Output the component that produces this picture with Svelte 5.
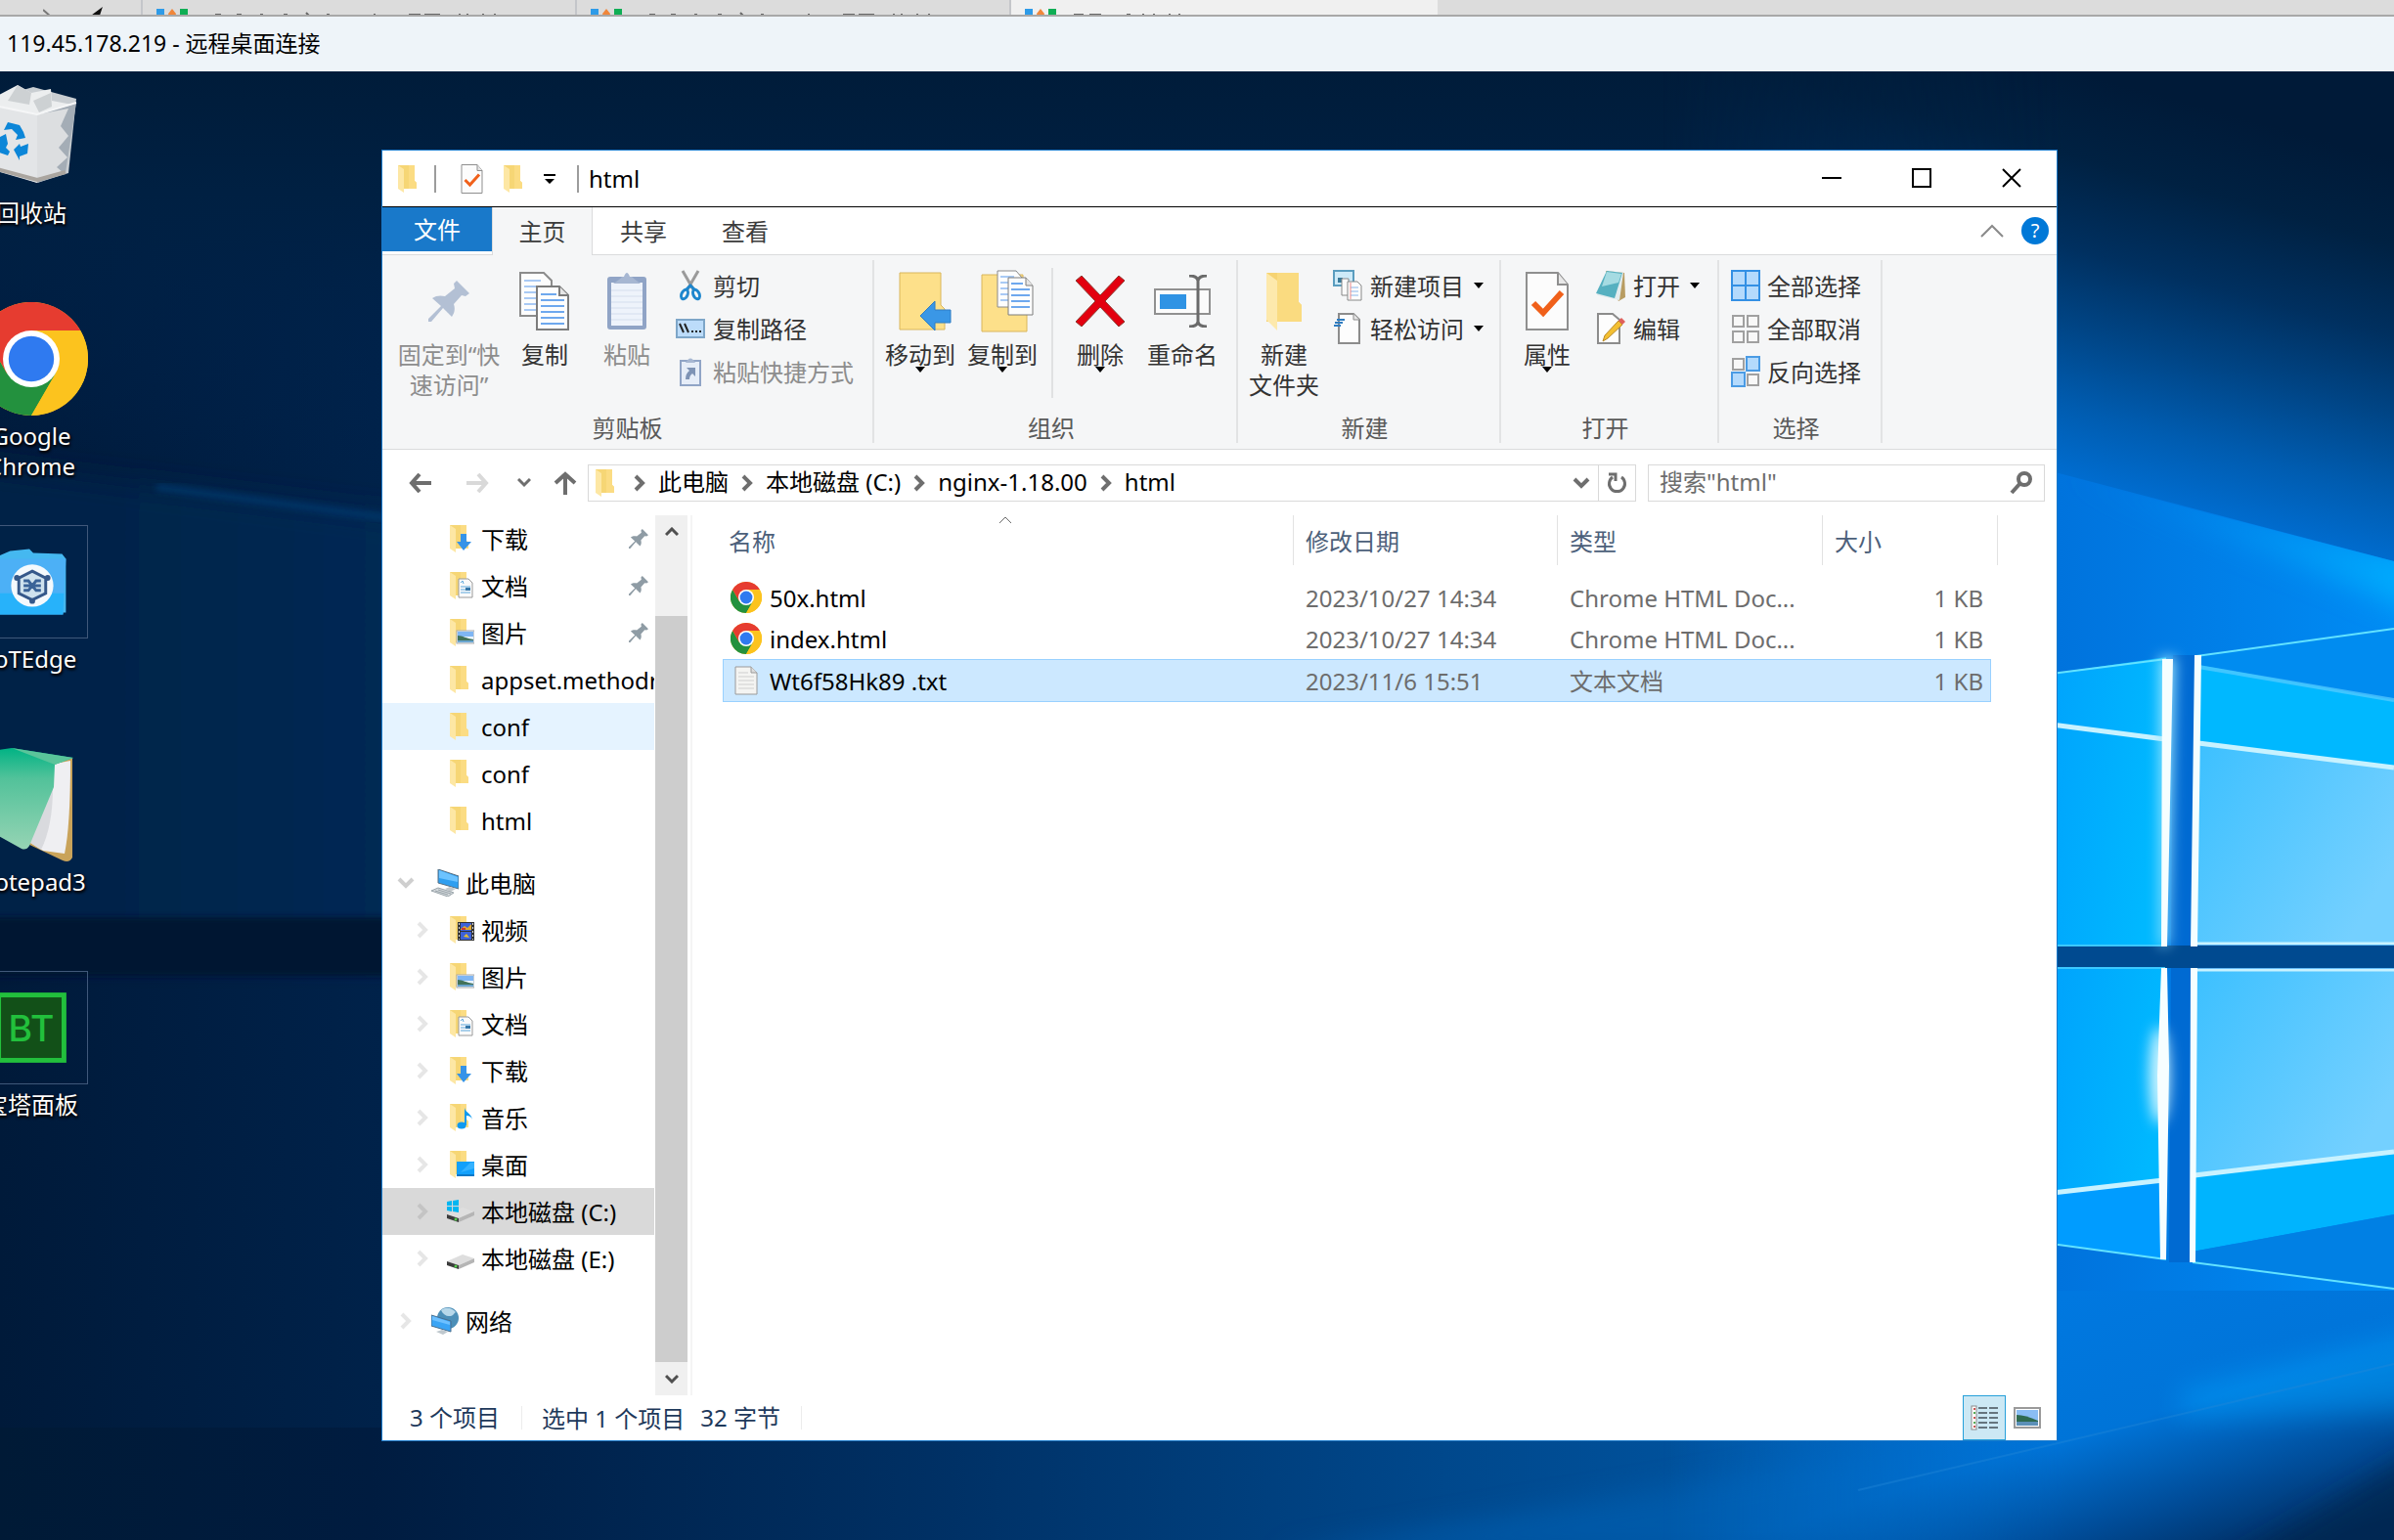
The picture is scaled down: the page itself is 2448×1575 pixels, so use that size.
<script>
  const quick = [
    { name: '下载', icon: 'download', pin: true },
    { name: '文档', icon: 'document', pin: true },
    { name: '图片', icon: 'picture', pin: true },
    { name: 'appset.methodresult', icon: 'plain' },
    { name: 'conf', icon: 'plain', hover: true },
    { name: 'conf', icon: 'plain' },
    { name: 'html', icon: 'plain' }
  ];
  const computer = [
    { name: '视频', icon: 'video' },
    { name: '图片', icon: 'picture' },
    { name: '文档', icon: 'document' },
    { name: '下载', icon: 'download' },
    { name: '音乐', icon: 'music' },
    { name: '桌面', icon: 'desktop' },
    { name: '本地磁盘 (C:)', icon: 'driveC', current: true },
    { name: '本地磁盘 (E:)', icon: 'drive' }
  ];
  const files = [
    { name: '50x.html', date: '2023/10/27 14:34', type: 'Chrome HTML Doc...', size: '1 KB', icon: 'chrome' },
    { name: 'index.html', date: '2023/10/27 14:34', type: 'Chrome HTML Doc...', size: '1 KB', icon: 'chrome' },
    { name: 'Wt6f58Hk89 .txt', date: '2023/11/6 15:51', type: '文本文档', size: '1 KB', icon: 'text', selected: true }
  ];
  const crumbs = ['此电脑', '本地磁盘 (C:)', 'nginx-1.18.00', 'html'];
  const shortcuts = [
    { icon: 'bin', lines: ['回收站'] },
    { icon: 'chrome', lines: ['Google', 'Chrome'] },
    { icon: 'iot', lines: ['IoTEdge'], framed: true },
    { icon: 'notepad', lines: ['Notepad3'] },
    { icon: 'bt', lines: ['宝塔面板'], framed: true }
  ];
</script>

{#snippet chrome()}
  <svg viewBox="0 0 48 48" aria-hidden="true">
    <circle cx="24" cy="24" r="24" fill="#fcc31e" />
    <path d="M24 24 L3.2 12 A24 24 0 0 1 44.8 12 L24 12 Z" fill="#e63c30" />
    <path d="M3.2 12 A24 24 0 0 0 24 48 L34.4 30 L24 24 L13.6 30 Z" fill="#23913e" />
    <path d="M3.2 12 L13.6 30 L24 24 V12 Z" fill="#e63c30" />
    <path d="M24 12 H44.8 A24 24 0 0 1 24 48 L34.4 30 Z" fill="#fcc31e" />
    <circle cx="24" cy="24" r="12" fill="#fff" />
    <circle cx="24" cy="24" r="9.6" fill="#2f7af0" />
  </svg>
{/snippet}

{#snippet folder(kind)}
  <svg class="i-folder" viewBox="0 0 28 28" width="28" height="28" aria-hidden="true">
    <path d="M3 0H20V16L22 18V24H3Z" fill="#f6d675" />
    <path d="M14 0H20V16L22 18V24H14Z" fill="#fbdc83" />
    <path d="M3 0L9 4V28L3 24Z" fill="#fde7a4" />
    {#if kind === 'download'}
      <path d="M14 9H20V17H25L17 26L10 17H14Z" fill="#3593e8" />
    {:else if kind === 'document'}
      <path d="M12 7H22L26 11V26H12Z" fill="#fafafa" stroke="#9a9a9a" />
      <path d="M14 11l2-2 1 3M14 15h10M14 18h10M14 21h10" stroke="#5aa6dc" fill="none" />
      <rect x="19" y="16" width="5" height="3" fill="#3577a8" />
    {:else if kind === 'picture'}
      <rect x="10" y="12" width="18" height="13" fill="#e8f4ff" stroke="#aaa" />
      <rect x="11" y="13" width="16" height="5" fill="#7fb6f4" />
      <path d="M11 17c5 0 9 3 16 4v1H11z" fill="#42725a" />
      <rect x="11" y="22" width="16" height="2" fill="#6aa5cf" />
    {:else if kind === 'video'}
      <rect x="11" y="6" width="17" height="19" fill="#333" />
      <rect x="14" y="7" width="11" height="8" fill="#3d62d8" />
      <rect x="14" y="16" width="11" height="8" fill="#3d62d8" />
      <path d="M14 13l4-3 3 2 4-4v6H14z" fill="#e0a82e" />
      <path d="M17 21l3-3 3 4z" fill="#e8c02e" />
      <path d="M15 12h4v2h-4z" fill="#d23a2a" />
      <path d="M12.500 7v17M26.500 7v17" stroke="#ddd" stroke-dasharray="2 2" />
    {:else if kind === 'music'}
      <ellipse cx="15" cy="22" rx="4.500" ry="3.500" fill="#109af0" />
      <path d="M18 22V4C19 9 26 10 26 17C26 13 22 12 20 12V22Z" fill="#109af0" />
    {:else if kind === 'desktop'}
      <path d="M10 11H28V25H10Z" fill="#12a0fb" />
      <path d="M10 24H28V26H10Z" fill="#0879c8" />
      <path d="M14 22L24 12H28V18Z" fill="#35b2ff" />
    {/if}
  </svg>
{/snippet}

{#snippet treeIcon(kind)}
  {#if kind === 'driveC' || kind === 'drive'}
    <svg viewBox="0 0 28 28" width="28" height="28" aria-hidden="true">
      <path d="M0 17L16 10L28 14L12 21Z" fill="#dedede" />
      <path d="M12 21L28 14V18L12 25Z" fill="#b5b5b5" />
      <path d="M0 17L12 21V25L0 21Z" fill="#3c3c3c" />
      <circle cx="9" cy="22" r="1.500" fill="#56d04c" />
      {#if kind === 'driveC'}
        <path d="M0 4L5 3V8H0ZM6 3L12 2V8H6ZM0 9H5V14L0 13ZM6 9H12V15L6 14Z" fill="#00b6f1" />
      {/if}
    </svg>
  {:else if kind === 'pc'}
    <svg viewBox="0 0 28 28" width="28" height="28" aria-hidden="true">
      <path d="M7 0L28 7V20L7 14Z" fill="#2f9ff0" stroke="#587083" />
      <path d="M8 1L27 8V13L8 9Z" fill="#6cc3ff" />
      <path d="M14 20l5-2 6 2-5 3z" fill="#c3c9cc" />
      <path d="M0 22L7 19L23 24L17 28Z" fill="#d5dadd" stroke="#9aa4aa" />
      <path d="M4 22l13 4M7 21l13 4" stroke="#9aa4aa" fill="none" />
    </svg>
  {:else if kind === 'net'}
    <svg viewBox="0 0 28 28" width="28" height="28" aria-hidden="true">
      <circle cx="17" cy="11" r="11" fill="#4c8fb8" />
      <path d="M10 3c5-4 12-2 15 2-3 2-2 4-7 4-3 0-6-2-8-6z" fill="#b7d8ea" />
      <path d="M0 8L20 14V25L0 19Z" fill="#3aa4f5" stroke="#4b6f8d" />
      <path d="M1 9L19 15V18L1 13Z" fill="#6dc0ff" />
      <path d="M5 25l6-2 6 2-5 3z" fill="#bfc8ce" />
    </svg>
  {:else}
    {@render folder(kind)}
  {/if}
{/snippet}

{#snippet pages()}
  <svg viewBox="0 0 52 60" width="52" height="60" aria-hidden="true">
    <path d="M1 1H25L33 9V45H1Z" fill="#fdfdfd" stroke="#8c8c8c" stroke-width="2" />
    <path d="M5 9h17M5 15h17M5 21h17M5 27h17M5 33h12M5 39h12" stroke="#a9caf5" stroke-width="2" />
    <path d="M18 15H41L50 24V59H18Z" fill="#fdfdfd" stroke="#7c7c7c" stroke-width="2" />
    <path d="M41 15V24H50" fill="#e6e6e6" stroke="#7c7c7c" stroke-width="2" />
    <path d="M22 23h16M22 29h24M22 35h24M22 41h24M22 47h24M22 53h24" stroke="#6ea8ee" stroke-width="2" />
  </svg>
{/snippet}

{#snippet pushpin(size, color)}
  <svg viewBox="0 0 42 42" width={size} height={size} aria-hidden="true">
    <path d="M29 0L42 13L38 16L34 15L26 24C28 30 26 34 24 37L15 28L3 42L0 42V39L13 26L4 18C8 15 13 15 17 16L27 8L26 3Z" fill={color} />
  </svg>
{/snippet}

{#snippet check(w, h)}
  <svg viewBox="0 0 44 60" width={w} height={h} aria-hidden="true">
    <path d="M1 1H33L43 13V59H1Z" fill="#fcfcfc" stroke="#8f8f8f" stroke-width="2" />
    <path d="M33 1V13H43" fill="#e8e8e8" stroke="#8f8f8f" stroke-width="2" />
    <path d="M8 32L18 42L37 21" fill="none" stroke="#f0601a" stroke-width="6" />
  </svg>
{/snippet}

{#snippet chevron(color, w)}
  <svg viewBox="0 0 12 18" width={w} height="18" aria-hidden="true">
    <path d="M2 2L9 9L2 16" fill="none" stroke={color} stroke-width="4" />
  </svg>
{/snippet}

{#snippet down(color)}
  <svg viewBox="0 0 18 12" width="18" height="12" aria-hidden="true">
    <path d="M2 2L9 9L16 2" fill="none" stroke={color} stroke-width="4" />
  </svg>
{/snippet}

{#snippet caret()}
  <svg class="caret" viewBox="0 0 10 6" width="10" height="6" aria-hidden="true"><path d="M0 0H10L5 6Z" /></svg>
{/snippet}

<div class="screen">
  <div class="browser" aria-hidden="true">
    <div class="btab first">
      <svg viewBox="0 0 70 17" width="70" height="17"><path d="M0 10L8 17" stroke="#777" stroke-width="2" /><path d="M50 17L58 11L56 17" stroke="#111" stroke-width="3" fill="none" /></svg>
    </div>
    {#each [1, 2, 3] as n}
      <div class="btab" class:active={n === 3}>
        <svg viewBox="0 0 400 17" width="400" height="17">
          <rect x="0" y="9" width="8" height="8" fill="#2e9be8" />
          <path d="M16 9L20 14L19 17H13L12 14Z" fill="#f0863a" />
          <rect x="24" y="9" width="8" height="8" fill="#0fae55" />
          {#if n < 3}
            <path d="M60 15h6M82 15h5M106 15h3M130 15h4M153 13l3 3M174 15h3M223 14v2M258 15h12M274 15h16M310 14v2M318 14v2M334 14v2M346 14v2" stroke="#666" stroke-width="2" />
          {:else}
            <path d="M50 15h10M66 15h12M104 15h4M121 14v2M132 14v2M148 14v2M158 14v2" stroke="#666" stroke-width="2" />
          {/if}
        </svg>
      </div>
    {/each}
  </div>

  <header class="rdp">119.45.178.219 - 远程桌面连接</header>

  <main class="remote">
    <svg class="wallpaper" viewBox="0 73 2448 1502" preserveAspectRatio="none" aria-hidden="true">
      <defs>
        <linearGradient id="base" x1="0" x2="1">
          <stop offset="0" stop-color="#001a3a" /><stop offset="0.16" stop-color="#00224a" />
          <stop offset="0.5" stop-color="#003c7c" /><stop offset="0.8" stop-color="#0062b8" /><stop offset="1" stop-color="#0066c4" />
        </linearGradient>
        <linearGradient id="sky" gradientUnits="userSpaceOnUse" x1="0" y1="73" x2="0" y2="480">
          <stop offset="0" stop-color="#001c3a" /><stop offset="0.3" stop-color="#002042" /><stop offset="1" stop-color="#002450" stop-opacity="0" />
        </linearGradient>
        <linearGradient id="right" gradientUnits="userSpaceOnUse" x1="2290" y1="120" x2="2180" y2="520">
          <stop offset="0" stop-color="#001a38" /><stop offset="0.2" stop-color="#002142" />
          <stop offset="0.42" stop-color="#003060" /><stop offset="0.6" stop-color="#004484" />
          <stop offset="0.8" stop-color="#005cb0" /><stop offset="1" stop-color="#0070d6" />
        </linearGradient>
        <linearGradient id="mid" x1="0" x2="1"><stop offset="0" stop-color="#0072dc" /><stop offset="1" stop-color="#008cf4" /></linearGradient>
        <linearGradient id="beam" x1="0" x2="1"><stop offset="0" stop-color="#0084ec" stop-opacity="0" /><stop offset="1" stop-color="#00b0ff" /></linearGradient>
        <linearGradient id="paneL" x1="0" x2="1" y2="0.300"><stop offset="0" stop-color="#00a2fc" /><stop offset="1" stop-color="#00b8ff" /></linearGradient>
        <linearGradient id="paneR" x1="0" x2="1" y2="0.600"><stop offset="0" stop-color="#3cc0ff" /><stop offset="1" stop-color="#74d0ff" /></linearGradient>
        <linearGradient id="foot" gradientUnits="userSpaceOnUse" x1="2200" y1="1300" x2="2290" y2="1600">
          <stop offset="0" stop-color="#0078e0" /><stop offset="0.45" stop-color="#0074d8" /><stop offset="0.75" stop-color="#004c98" /><stop offset="1" stop-color="#002c5e" />
        </linearGradient>
        <linearGradient id="bottom" gradientUnits="userSpaceOnUse" x1="0" y1="0" x2="2110" y2="0">
          <stop offset="0" stop-color="#001a36" /><stop offset="0.18" stop-color="#001c40" /><stop offset="0.45" stop-color="#003064" />
          <stop offset="0.7" stop-color="#00488c" /><stop offset="1" stop-color="#0060b4" />
        </linearGradient>
        <linearGradient id="leftLight" x1="0" x2="1"><stop offset="0" stop-color="#002144" /><stop offset="1" stop-color="#002a56" /></linearGradient>
        <linearGradient id="fade" gradientUnits="userSpaceOnUse" x1="1700" y1="0" x2="2110" y2="0">
          <stop offset="0" stop-color="#000" /><stop offset="1" stop-color="#fff" />
        </linearGradient>
        <mask id="easeIn" maskUnits="userSpaceOnUse" x="1700" y="73" width="748" height="1502"><rect x="1700" y="73" width="748" height="1502" fill="url(#fade)" /></mask>
        <clipPath id="below"><path d="M2090 482L2448 574V800H2090Z" /></clipPath>
        <filter id="soft" x="-20%" y="-30%" width="140%" height="160%"><feGaussianBlur stdDeviation="14" /></filter>
        <filter id="glow" x="-300%" y="-20%" width="700%" height="140%"><feGaussianBlur stdDeviation="7" /></filter>
        <filter id="fine"><feGaussianBlur stdDeviation="3" /></filter>
      </defs>
      <rect y="73" width="2448" height="1502" fill="url(#base)" />
      <rect y="73" width="2448" height="420" fill="url(#sky)" />
      <path d="M-60 470L460 535V980H-60Z" fill="url(#leftLight)" filter="url(#soft)" />
      <path d="M160 498L400 530" stroke="#003a70" stroke-width="8" opacity="0.700" filter="url(#fine)" />
      <rect x="-40" y="938" width="470" height="60" fill="#001430" filter="url(#fine)" />
      <rect y="1460" width="2448" height="115" fill="url(#bottom)" />
      <path d="M1300 1590L2130 1450V1590Z" fill="#0064b8" opacity="0.500" filter="url(#soft)" />
      <g mask="url(#easeIn)">
        <rect x="1700" y="73" width="748" height="540" fill="url(#right)" />
        <rect x="1700" y="1280" width="748" height="295" fill="url(#foot)" />
      </g>
      <path d="M2090 480L2448 574V1320H2090Z" fill="url(#mid)" />
      <g clip-path="url(#below)"><path d="M2090 482L2480 574V630L2200 520Z" fill="url(#beam)" filter="url(#soft)" /></g>
      <path d="M2230 1420L2520 1350V1440L2230 1450Z" fill="#009cf8" opacity="0.500" filter="url(#soft)" />
      <path d="M2260 1610L2500 1470V1610Z" fill="#002850" opacity="0.700" filter="url(#soft)" />
      <path d="M1900 1524L2448 1395" stroke="#2488d8" stroke-width="2" opacity="0.400" />
      <path d="M2222 670H2244L2240 1291H2218Z" fill="#006ad2" />
      <rect x="2090" y="967" width="358" height="23" fill="#004a90" />
      <path d="M2090 690L2215 672V967H2090Z" fill="url(#paneL)" />
      <path d="M2090 990H2214V1288L2090 1270Z" fill="url(#paneL)" />
      <path d="M2245 671L2448 644V715L2248 682Z" fill="#008cf0" />
      <path d="M2248 680L2448 716V786L2248 761Z" fill="#00b8ff" />
      <path d="M2246 761L2448 786V966H2244Z" fill="url(#paneR)" />
      <path d="M2243 991H2448V1178L2242 1202Z" fill="url(#paneR)" />
      <path d="M2242 1202L2448 1178V1242L2242 1280Z" fill="#00b4fe" />
      <path d="M2242 1280L2448 1242V1318L2242 1290Z" fill="#0080e4" />
      <path d="M2090 1220L2210 1207V1288L2090 1271Z" fill="#009cff" />
      <g fill="none" stroke="#c8f2ff">
        <path d="M2090 690L2215 674M2246 671L2448 643M2090 1271L2215 1288M2242 1291L2448 1318" stroke="#62e2ff" stroke-width="2" />
        <path d="M2248 682L2448 716" stroke="#5accff" stroke-width="4" opacity="0.700" />
        <path d="M2090 740L2214 756M2248 760L2448 785M2090 1221L2212 1207M2244 1202L2448 1178" stroke-width="5" />
        <path d="M2090 967H2214M2090 990H2214" stroke="#3cc8ff" stroke-width="2" />
        <path d="M2242 965H2448M2242 992H2448" stroke-width="3" />
      </g>
      <path d="M2209 672H2224L2217 967H2209Z" fill="#a0e8ff" filter="url(#glow)" />
      <ellipse cx="2208" cy="1100" rx="10" ry="50" fill="#d4f6ff" filter="url(#glow)" />
      <path d="M2211 674L2222 674L2216 968H2210ZM2210 990H2216L2218 1090L2215 1288H2209L2206 1100Z" fill="#f6feff" />
      <path d="M2244 670H2251L2247 968H2240ZM2240 990H2247L2245 1291H2239Z" fill="#f4feff" />
    </svg>

    <nav class="shortcuts" aria-label="桌面">
      {#each shortcuts as s}
        <a class="shortcut" href="#desktop">
          <span class="art" class:framed={s.framed}>
            {#if s.icon === 'chrome'}
              {@render chrome()}
            {:else if s.icon === 'bin'}
              <svg viewBox="0 0 116 116" aria-hidden="true">
                <path d="M4 24L60 8L104 20L96 96L64 106L16 90Z" fill="#c9ced2" />
                <path d="M6 24L64 36V106L16 92Z" fill="#e3e5e7" />
                <path d="M64 36L104 24L93 96L64 106Z" fill="#a4adb6" />
                <path d="M64 36L96 30L88 48L96 58L86 70L95 80L84 90L91 96L64 104Z" fill="#dcdee0" />
                <path d="M10 24L44 6L58 14L78 10L79 22L100 26L64 36Z" fill="#eceeef" />
                <path d="M44 6L34 22L56 26L58 14ZM60 22L78 14L79 28L66 34Z" fill="#cdd1d3" />
                <path d="M104 24L64 36L6 24" fill="none" stroke="#f5f6f7" stroke-width="2" />
                <path d="M16 90L64 103L93 95" fill="none" stroke="#aaa59f" stroke-width="4" />
                <path d="M30 52L34 44L46 47L50 54L52 60L42 62L44 57L38 51ZM24 60L32 56L34 66L32 70L36 74L34 78L22 74ZM40 72L46 66L47 69L55 66L54 76L46 79L46 83Z" fill="#0c86d8" />
              </svg>
            {:else if s.icon === 'iot'}
              <svg viewBox="0 0 116 116" aria-hidden="true">
                <path d="M22 32L36 26L56 24L60 28L90 29L94 34V90H22Z" fill="#45b8f0" />
                <path d="M22 34H94L91 92H24Z" fill="#4cb0f6" />
                <path d="M23 70H92L91 92H24Z" fill="#27b2fa" />
                <circle cx="59" cy="62" r="22" fill="#f4f9fd" />
                <path d="M59 47L73 54V70L59 77L45 70V54Z" fill="#cfe2ee" stroke="#35588a" stroke-width="3" />
                <path d="M50 57H55L63 67H68M50 67H55L63 57H68M50 62H68" fill="none" stroke="#3a6398" stroke-width="3" />
                <circle cx="43" cy="54" r="3" fill="#35588a" /><circle cx="75" cy="54" r="3" fill="#35588a" /><circle cx="59" cy="78" r="3" fill="#35588a" />
              </svg>
            {:else if s.icon === 'notepad'}
              <svg viewBox="0 0 116 116" aria-hidden="true">
                <defs><linearGradient id="np" x2="0" y2="1"><stop offset="0" stop-color="#00b384" /><stop offset="0.300" stop-color="#52c29a" /><stop offset="1" stop-color="#96d4b4" /></linearGradient></defs>
                <path d="M82 16L100 10V112Q97 118 90 115L50 96Z" fill="#c9a35a" />
                <path d="M82 16L98 13Q98 80 92 108L70 105L54 95Z" fill="#efeff2" />
                <path d="M80 40Q80 80 68 104L54 95Z" fill="#d9dade" />
                <path d="M10 4L38 0L101 10L82 17L81 40L56 100Q53 105 48 103L10 82Z" fill="url(#np)" />
                <path d="M38 0L101 10L82 17Z" fill="#5ac49a" />
              </svg>
            {:else}
              <svg viewBox="0 0 116 116" aria-hidden="true">
                <rect x="24" y="24" width="68" height="68" fill="#125018" stroke="#22c03c" stroke-width="5" />
                <text x="58" y="72" text-anchor="middle" class="bt">BT</text>
              </svg>
            {/if}
          </span>
          {#each s.lines as line}<span>{line}</span>{/each}
        </a>
      {/each}
    </nav>

    <section class="window" aria-label="html">
      <div class="titlebar">
        <span class="tfolder">{@render folder('plain')}</span>
        <span class="bar"></span>
        <button class="q1" aria-label="属性">{@render check(23, 30)}</button>
        <button class="q2" aria-label="新建文件夹">{@render folder('plain')}</button>
        <button class="q3" aria-label="自定义快速访问工具栏">
          <svg viewBox="0 0 12 10" width="12" height="10"><path d="M0 0H12V2H0ZM1 5H11L6 10Z" /></svg>
        </button>
        <span class="bar"></span>
        <h1>html</h1>
        <div class="controls">
          <button aria-label="最小化"><svg viewBox="0 0 20 20" width="20" height="20"><path d="M0 10H20" stroke="#000" stroke-width="2" /></svg></button>
          <button aria-label="最大化"><svg viewBox="0 0 20 20" width="20" height="20"><rect x="1" y="1" width="18" height="18" fill="none" stroke="#000" stroke-width="2" /></svg></button>
          <button aria-label="关闭"><svg viewBox="0 0 20 20" width="20" height="20"><path d="M1 1L19 19M19 1L1 19" stroke="#000" stroke-width="2" /></svg></button>
        </div>
      </div>

      <div class="tabs">
        <button class="file">文件</button>
        <button class="tab on">主页</button>
        <button class="tab">共享</button>
        <button class="tab">查看</button>
        <span class="fill"></span>
        <button class="collapse" aria-label="折叠功能区"><svg viewBox="0 0 24 16" width="24" height="16"><path d="M1 14L12 3L23 14" fill="none" stroke="#8a8a8a" stroke-width="2" /></svg></button>
        <button class="help" aria-label="帮助">?</button>
      </div>

      <div class="ribbon">
        <div class="group g1">
          <div class="tools">
            <button class="big wide off" disabled><span class="pic">{@render pushpin(42, '#b3c0d4')}</span><span>固定到“快</span><span>速访问”</span></button>
            <button class="big"><span class="pic">{@render pages()}</span><span>复制</span></button>
            <button class="big off" disabled>
              <span class="pic"><svg viewBox="0 0 42 60" width="42" height="60" aria-hidden="true">
                <rect x="1" y="5" width="40" height="54" rx="3" fill="#90a4c6" />
                <rect x="5" y="11" width="32" height="44" fill="#eef3fb" />
                <path d="M5 19h32M5 25h32M5 31h32M5 37h32M5 43h32M5 49h32" stroke="#d5deed" />
                <path d="M7 12Q14 8 16 5H18Q21-3 24 5H26Q29 8 35 12Z" fill="#a7b7d2" />
              </svg></span><span>粘贴</span>
            </button>
            <div class="stack">
              <button class="small">
                <span><svg viewBox="0 0 22 32" width="22" height="32" aria-hidden="true"><path d="M3 1L14 20M19 1L8 20" stroke="#9a9a9a" stroke-width="3" /><ellipse cx="5" cy="25" rx="3" ry="5" transform="rotate(25 5 25)" fill="none" stroke="#1d86cd" stroke-width="3" /><ellipse cx="17" cy="25" rx="3" ry="5" transform="rotate(-25 17 25)" fill="none" stroke="#1d86cd" stroke-width="3" /><path d="M7 20L11 16L15 20" stroke="#1d86cd" stroke-width="3" fill="none" /></svg></span>剪切</button>
              <button class="small">
                <span><svg viewBox="0 0 30 20" width="30" height="20" aria-hidden="true"><rect x="1" y="1" width="28" height="18" fill="#bcdcfa" stroke="#7ea6c8" stroke-width="2" /><path d="M4 5L8 14M9 5L13 14M16 13h2M20 13h2M24 13h2" stroke="#222" stroke-width="2" /></svg></span>复制路径</button>
              <button class="small off" disabled>
                <span><svg viewBox="0 0 22 30" width="22" height="30" aria-hidden="true"><rect x="1" y="4" width="20" height="25" fill="#e6edf8" stroke="#90a4c6" stroke-width="2" /><path d="M6 6Q11-3 16 6Z" fill="#a7b7d2" /><path d="M7 11H16V20L13 17Q10 19 10 23H6Q6 17 10 14Z" fill="#7e93b5" /></svg></span>粘贴快捷方式</button>
            </div>
          </div>
          <p>剪贴板</p>
        </div>

        <div class="group g2">
          <div class="tools">
            <button class="big"><span class="pic lead"><svg viewBox="0 0 54 60" width="54" height="60" aria-hidden="true"><path d="M1 1H43V34L47 38V59H1Z" fill="#fde08a" stroke="#d9b65c" /><path d="M22 45L37 30V39H53V52H37V60Z" fill="#3a97e6" stroke="#2f7dc4" /></svg></span><span>移动到</span>{@render caret()}</button>
            <button class="big"><span class="pic lead"><svg viewBox="0 0 54 64" width="54" height="64" aria-hidden="true"><path d="M1 5H43V38L47 42V63H1Z" fill="#fde08a" stroke="#d9b65c" /><path d="M17 1H36L42 8V38H17Z" fill="#fdfdfd" stroke="#8a8a8a" /><path d="M20 7h14M20 13h8M20 19h8M20 25h8M20 31h8" stroke="#a9caf5" stroke-width="2" /><path d="M28 8H46L53 16V46H28Z" fill="#fdfdfd" stroke="#7c7c7c" /><path d="M46 8V16H53" fill="#e6e6e6" stroke="#7c7c7c" /><path d="M31 14h12M31 20h19M31 26h19M31 32h19M31 38h19" stroke="#6ea8ee" stroke-width="2" /></svg></span><span>复制到</span>{@render caret()}</button>
            <span class="split"></span>
            <button class="big"><span class="pic"><svg viewBox="0 0 50 52" width="50" height="52" aria-hidden="true"><path d="M6 0L25 20L44 0L50 5L30 26L50 47L44 52L25 32L6 52L0 47L20 26L0 5Z" fill="#e3000f" stroke="#8c3a32" /></svg></span><span>删除</span>{@render caret()}</button>
            <button class="big"><span class="pic"><svg viewBox="0 0 58 54" width="58" height="54" aria-hidden="true"><rect x="1" y="15" width="56" height="25" fill="#fbfbfb" stroke="#909090" stroke-width="2" /><rect x="6" y="20" width="27" height="15" fill="#2f93e4" /><path d="M45 4V50M36 1Q44 1 45 6Q46 1 54 1M36 53Q44 53 45 48Q46 53 54 53" fill="none" stroke="#6a6a6a" stroke-width="3" /></svg></span><span>重命名</span></button>
          </div>
          <p>组织</p>
        </div>

        <div class="group g3">
          <div class="tools">
            <button class="big"><span class="pic"><svg viewBox="0 0 38 60" width="38" height="60" aria-hidden="true"><path d="M1 1H34V31L37 34V51H1Z" fill="#f6d372" /><path d="M12 1H34V31L37 34V51H12Z" fill="#fadb80" /><path d="M1 1L12 9V60L1 49Z" fill="#fde9ac" /></svg></span><span>新建</span><span>文件夹</span></button>
            <div class="stack">
              <button class="small"><span><svg viewBox="0 0 30 32" width="30" height="32" aria-hidden="true"><rect x="1" y="1" width="20" height="15" fill="#cdeaf8" stroke="#5a9dbf" stroke-width="2" /><path d="M5 13V8H10V13Z" fill="#3a7a9a" /><path d="M9 9H16V26H9Z" fill="#fafafa" stroke="#888" /><path d="M15 12H25L29 16V31H15Z" fill="#fdfdfd" stroke="#888" /><path d="M18 18h8M18 22h8M18 26h8" stroke="#8ab6ea" /><path d="M18 13v17" stroke="#e88" /></svg></span>新建项目{@render caret()}</button>
              <button class="small"><span><svg viewBox="0 0 28 32" width="28" height="32" aria-hidden="true"><path d="M5 1H20L26 7V31H5Z" fill="#fdfdfd" stroke="#8c8c8c" stroke-width="2" /><path d="M20 1V7H26" fill="#e6e6e6" stroke="#8c8c8c" /><path d="M3 7h8M1 10h8M0 13h7" stroke="#2e7cc0" stroke-width="2" /></svg></span>轻松访问{@render caret()}</button>
            </div>
          </div>
          <p>新建</p>
        </div>

        <div class="group g4">
          <div class="tools">
            <button class="big"><span class="pic">{@render check(44, 60)}</span><span>属性</span>{@render caret()}</button>
            <div class="stack">
              <button class="small"><span><svg viewBox="0 0 32 32" width="32" height="32" aria-hidden="true"><path d="M11 1L30 3L31 28L24 32Z" fill="#b89c62" /><path d="M14 1L29 3L25 31L2 26Z" fill="#e4ecee" /><path d="M12 1L28 3L20 29L1 24Z" fill="#56b0c0" /><path d="M12 2L27 4L24 13L7 17Z" fill="#a5dbe2" /></svg></span>打开{@render caret()}</button>
              <button class="small"><span><svg viewBox="0 0 30 32" width="30" height="32" aria-hidden="true"><path d="M2 1H17L24 7V31H2Z" fill="#fdfdfd" stroke="#8c8c8c" stroke-width="2" /><path d="M7 29L9 23L23 8L27 12L12 26Z" fill="#f3bf32" stroke="#b9892a" /><path d="M23 8L26 5L30 9L27 12Z" fill="#e0605c" /></svg></span>编辑</button>
            </div>
          </div>
          <p>打开</p>
        </div>

        <div class="group g5">
          <div class="tools">
            <div class="stack">
              <button class="small"><span><svg viewBox="0 0 30 32" width="30" height="32" aria-hidden="true"><g fill="#b4dafc" stroke="#3390e4" stroke-width="2"><path d="M1 1H15V16H1ZM15 1H29V16H15ZM1 16H15V31H1ZM15 16H29V31H15Z" /></g></svg></span>全部选择</button>
              <button class="small"><span><svg viewBox="0 0 30 32" width="30" height="32" aria-hidden="true"><g fill="#f8f8f8" stroke="#a0a0a0" stroke-width="2"><path d="M2 3H13V14H2ZM17 3H28V14H17ZM2 19H13V30H2ZM17 19H28V30H17Z" /></g></svg></span>全部取消</button>
              <button class="small"><span><svg viewBox="0 0 30 32" width="30" height="32" aria-hidden="true"><g fill="#f8f8f8" stroke="#a0a0a0" stroke-width="2"><path d="M2 3H13V14H2ZM17 19H28V30H17Z" /></g><g fill="#b4dafc" stroke="#4a9be4" stroke-width="2"><path d="M16 1H29V15H16ZM1 17H14V31H1Z" /></g></svg></span>反向选择</button>
            </div>
          </div>
          <p>选择</p>
        </div>
      </div>

      <div class="nav">
        <button aria-label="后退"><svg viewBox="0 0 24 20" width="24" height="20"><path d="M11 1L3 10L11 19M3 10H23" fill="none" stroke="#6e6e6e" stroke-width="4" /></svg></button>
        <button aria-label="前进"><svg viewBox="0 0 24 20" width="24" height="20"><path d="M13 1L21 10L13 19M21 10H1" fill="none" stroke="#d9d9d9" stroke-width="4" /></svg></button>
        <button class="recent" aria-label="最近位置"><svg viewBox="0 0 14 10" width="14" height="10"><path d="M1 1L7 7L13 1" fill="none" stroke="#6e6e6e" stroke-width="3" /></svg></button>
        <button class="up" aria-label="上移"><svg viewBox="0 0 24 24" width="24" height="24"><path d="M2 12L12 3L22 12M12 3V24" fill="none" stroke="#6e6e6e" stroke-width="4" /></svg></button>
        <div class="address">
          <span class="afolder">{@render folder('plain')}</span>
          {#each crumbs as c}
            <span class="sep">{@render chevron('#6e6e6e', 12)}</span><a href="#path">{c}</a>
          {/each}
          <span class="fill"></span>
          <button class="drop" aria-label="以前的位置">{@render down('#6e6e6e')}</button>
          <button class="refresh" aria-label="刷新"><svg viewBox="0 0 22 22" width="22" height="22"><path d="M15 5A8 8 0 1 1 6 5" fill="none" stroke="#6e6e6e" stroke-width="3" /><path d="M2 2H9V9" fill="none" stroke="#6e6e6e" stroke-width="3" /></svg></button>
        </div>
        <label class="search">
          <input type="text" placeholder={'搜索"html"'} aria-label="搜索html" />
          <svg viewBox="0 0 24 24" width="24" height="24" aria-hidden="true"><circle cx="15" cy="8" r="6" fill="none" stroke="#6e6e6e" stroke-width="4" /><path d="M11 12L2 22" stroke="#6e6e6e" stroke-width="4" /></svg>
        </label>
      </div>

      <div class="body">
        <nav class="tree" aria-label="导航窗格">
          {#each quick as q}
            <a href="#folder" class="leaf" class:hover={q.hover}>
              <span class="exp"></span>{@render treeIcon(q.icon)}<span class="label">{q.name}</span>
              {#if q.pin}<span class="pin">{@render pushpin(20, '#8f9ca5')}</span>{/if}
            </a>
          {/each}
          <a href="#pc" class="leaf root"><span class="exp">{@render down('#cfcfcf')}</span>{@render treeIcon('pc')}<span class="label">此电脑</span></a>
          {#each computer as c}
            <a href="#folder" class="leaf" class:current={c.current}>
              <span class="exp">{@render chevron(c.current ? '#c4c4c4' : '#e6e6e6', 12)}</span>{@render treeIcon(c.icon)}<span class="label">{c.name}</span>
            </a>
          {/each}
          <a href="#net" class="leaf root"><span class="exp">{@render chevron('#e6e6e6', 12)}</span>{@render treeIcon('net')}<span class="label">网络</span></a>
        </nav>
        <div class="scroll" aria-hidden="true">
          <span class="arrow"><svg viewBox="0 0 14 10" width="14" height="10"><path d="M1 8L7 2L13 8" fill="none" stroke="#505050" stroke-width="3" /></svg></span>
          <span class="track"></span>
          <span class="thumb"></span>
          <span class="arrow"><svg viewBox="0 0 14 10" width="14" height="10"><path d="M1 2L7 8L13 2" fill="none" stroke="#505050" stroke-width="3" /></svg></span>
        </div>
        <div class="list">
          <table>
            <colgroup><col /><col class="c-date" /><col class="c-type" /><col class="c-size" /><col class="c-end" /></colgroup>
            <thead>
              <tr>
                <th><div>名称<svg class="sort" viewBox="0 0 14 8" width="14" height="8" aria-hidden="true"><path d="M1 7L7 1L13 7" fill="none" stroke="#6a6a6a" /></svg></div></th>
                <th><div>修改日期</div></th>
                <th><div>类型</div></th>
                <th colspan="2"><div>大小</div></th>
              </tr>
            </thead>
            <tbody>
              {#each files as f}
                <tr class:selected={f.selected}>
                  <td>
                    <span class="fname">
                      <span class="ficon">
                        {#if f.icon === 'chrome'}{@render chrome()}{:else}
                          <svg viewBox="0 0 32 32" aria-hidden="true"><path d="M5 2H21L27 8V30H5Z" fill="#f4f4f2" stroke="#9a9a9a" /><path d="M21 2V8H27" fill="#ddd" stroke="#9a9a9a" /><path d="M8 8h10M8 12h16M8 16h16M8 20h16M8 24h16" stroke="#cfcfcf" /></svg>
                        {/if}
                      </span>{f.name}</span>
                  </td>
                  <td>{f.date}</td>
                  <td>{f.type}</td>
                  <td class="num">{f.size}</td>
                  <td class="end"></td>
                </tr>
              {/each}
            </tbody>
          </table>
        </div>
      </div>

      <footer class="status">
        <span class="s1">3 个项目</span>
        <span class="s2">选中 1 个项目</span>
        <span class="s3">32 字节</span>
        <span class="fill"></span>
        <button class="view on" aria-label="详细信息">
          <svg viewBox="0 0 28 26" width="28" height="26"><rect x="1" y="1" width="5" height="24" fill="#fff" stroke="#8a8a8a" /><path d="M3 4h2M3 13h2M3 22h2" stroke="#c55" stroke-width="2" /><path d="M3 8h2M3 18h2" stroke="#5a5" stroke-width="2" /><path d="M8 3h9M8 8h9M8 13h9M8 18h9M8 23h9M19 3h9M19 8h9M19 13h9M19 18h9M19 23h9" stroke="#66757e" stroke-width="2" /></svg>
        </button>
        <button class="view" aria-label="大缩略图">
          <svg viewBox="0 0 28 22" width="28" height="22"><rect x="1" y="1" width="26" height="20" fill="#fff" stroke="#9a9a9a" stroke-width="2" /><rect x="3" y="3" width="22" height="16" fill="#8abdf4" /><path d="M3 8Q12 8 25 14V15H3Z" fill="#2f6a50" /><rect x="3" y="15" width="22" height="4" fill="#5c90b8" /></svg>
        </button>
      </footer>
    </section>
  </main>
</div>

<style>
  :global(body) { margin: 0; overflow: hidden; }
  :global(html), :global(body), :global(#app) { height: 100%; }
  .screen {
    display: flex; flex-direction: column; height: 100vh; overflow: hidden;
    font-family: 'Noto Sans', 'Noto Sans CJK SC', sans-serif; font-size: 24px; line-height: 31px; color: #000;
  }
  .screen * { box-sizing: border-box; }
  button { font: inherit; color: inherit; background: none; border: 0; padding: 0; margin: 0; }
  a { color: inherit; text-decoration: none; }
  svg { flex: none; display: block; }
  .fill { flex: 1; }

  .browser { display: flex; height: 17px; flex: none; background: #dcdcdc; overflow: hidden; border-bottom: 2px solid #a8a8a8; }
  .btab { width: 444px; flex: none; padding-left: 14px; border-left: 2px solid #c4c6ca; overflow: hidden; }
  .btab.first { width: 144px; padding-left: 44px; border: 0; }
  .btab.active { width: 438px; background: #f0f0f0; }
  .rdp { flex: none; height: 56px; padding-left: 7px; line-height: 54px; font-size: 23px; background: #eef4f9; white-space: nowrap; }

  .remote { position: relative; flex: 1; overflow: hidden; background: #001c3c; }
  .wallpaper { position: absolute; inset: 0; width: 100%; height: 100%; }
  .shortcuts { position: relative; display: flex; flex-direction: column; width: 116px; margin-left: -26px; padding-top: 8px; }
  .shortcut {
    display: flex; flex-direction: column; align-items: center; height: 228px;
    color: #fff; text-shadow: 0 1px 3px #000, 1px 2px 3px #000; white-space: nowrap;
  }
  .art { width: 116px; height: 116px; margin-bottom: 5px; flex: none; }
  .art svg { width: 100%; height: 100%; }
  .framed { border: 1px solid #40587a; }
  .bt { font: 500 38px Inter, sans-serif; fill: #22c03c; text-shadow: none; }

  .window {
    position: absolute; left: 390px; top: 80px; right: 344px; bottom: 101px;
    display: flex; flex-direction: column; background: #fff; border: 1px solid #1979ca;
  }
  .titlebar { display: flex; align-items: center; height: 58px; flex: none; border-bottom: 1px solid #000; }
  .tfolder { margin-left: 13px; margin-right: 12px; }
  .bar { width: 2px; height: 28px; background: #9c9c9c; }
  .q1 { margin-left: 25px; margin-right: 18px; }
  .q3 { margin: 0 22px 0 16px; }
  h1 { margin: 0 0 0 10px; font-size: 24px; font-weight: 400; }
  .controls { display: flex; margin-left: auto; align-self: stretch; }
  .controls button { width: 92px; display: grid; place-items: center; padding-bottom: 2px; }

  .tabs { display: flex; align-items: center; height: 49px; flex: none; border-bottom: 1px solid #dadbdc; color: #3b3b3b; }
  .file { width: 112px; height: 45px; align-self: flex-start; background: #1979ca; color: #fff; }
  .tab { width: 104px; height: 49px; }
  .tab.on { width: 103px; align-self: flex-start; background: #f5f6f7; border: solid #dadbdc; border-width: 0 1px; }
  .collapse { margin-right: 18px; }
  .help { width: 28px; height: 28px; margin-right: 8px; border-radius: 50%; background: #0078d7; color: #fff; font-size: 20px; line-height: 28px; }

  .ribbon { display: flex; height: 199px; flex: none; background: #f5f6f7; border-bottom: 1px solid #dadbdc; color: #333; padding: 5px 0 6px; }
  .group { display: flex; flex-direction: column; border-right: 2px solid #e2e3e4; flex: none; }
  .group p { margin: 0; color: #5a5a5a; text-align: center; }
  .tools { display: flex; flex: 1; align-items: flex-start; padding-top: 4px; }
  .g1 { width: 503px; }
  .g2 { width: 372px; }
  .g3 { width: 269px; }
  .g4 { width: 223px; }
  .g5 { width: 167px; }
  .g1 .tools { padding-left: 12px; }
  .g2 .tools, .g3 .tools, .g4 .tools, .g5 .tools { padding-left: 5px; }
  .g2 p, .g3 p, .g4 p, .g5 p { padding-right: 8px; }
  .big { width: 84px; display: flex; flex-direction: column; align-items: center; white-space: nowrap; }
  .big.wide { width: 112px; }
  .pic { display: grid; place-items: center; height: 72px; margin-bottom: 5px; padding-top: 4px; }
  .pic.lead { padding-left: 10px; }
  .big .caret { margin-top: -3px; }
  .small { display: flex; align-items: center; height: 44px; white-space: nowrap; }
  .small > span { width: 32px; margin: 0 7px 0 7px; display: grid; place-items: center; }
  .g5 .small > span { margin: 0 6px; }
  .small .caret { margin-left: 10px; }
  .off { color: #8d8d8d; }
  .split { width: 2px; height: 133px; margin: 4px 6px 0 8px; background: #e0e1e2; }

  .nav { display: flex; align-items: center; height: 67px; flex: none; padding: 0 12px 0 10px; }
  .nav > button { width: 58px; height: 38px; display: grid; place-items: center; }
  .nav > .recent { width: 38px; }
  .nav > .up { width: 45px; }
  .address { display: flex; align-items: center; flex: 1; height: 38px; border: 1px solid #d9d9d9; padding-left: 4px; white-space: nowrap; margin-right: 12px; margin-left: 1px; line-height: 30px; }
  .address a { padding-bottom: 2px; }
  .afolder { margin-right: 1px; }
  .sep { width: 38px; display: grid; place-items: center; }
  .drop { width: 34px; height: 36px; display: grid; place-items: center; }
  .refresh { width: 38px; height: 36px; border-left: 1px solid #d9d9d9; display: grid; place-items: center; }
  .search { width: 406px; height: 38px; flex: none; display: flex; align-items: center; border: 1px solid #d9d9d9; padding: 0 11px; }
  .search input { flex: 1; min-width: 0; font: inherit; border: 0; padding: 0 0 2px; outline: 0; background: none; height: 34px; }
  .search input::placeholder { color: #6d6d6d; opacity: 1; }

  .body { display: flex; flex: 1; min-height: 0; }
  .tree { width: 278px; flex: none; overflow: hidden; }
  .leaf { display: flex; align-items: center; height: 48px; white-space: nowrap; overflow: hidden; }
  .exp { width: 24px; margin: 0 13px 0 29px; flex: none; display: grid; place-items: center; }
  .label { margin-left: 7px; }
  .root { margin-top: 16px; }
  .root .exp { margin: 0 14px 0 12px; }
  .pin { margin-left: auto; margin-right: 6px; flex: none; }
  .hover { background: #e5f3ff; }
  .current { background: #d9d9d9; }
  .scroll { width: 33px; margin-left: 1px; flex: none; display: flex; flex-direction: column; background: #f0f0f0; }
  .arrow { height: 34px; display: grid; place-items: center; flex: none; }
  .track { flex: 9; }
  .thumb { flex: 99; background: #cdcdcd; }
  .list { flex: 1; margin-left: 3px; border-left: 2px solid #f4f4f4; padding: 0 60px 0 31px; min-width: 0; }

  table { width: 100%; table-layout: fixed; border-collapse: separate; border-spacing: 0; }
  .c-date { width: 270px; }
  .c-type { width: 271px; }
  .c-size { width: 172px; }
  .c-end { width: 7px; }
  th { padding: 0 0 12px; font-weight: 400; text-align: left; color: #4c607a; }
  th div { position: relative; height: 51px; line-height: 54px; border-right: 1px solid #e2e2e2; padding-left: 12px; }
  th:first-child div { padding-left: 6px; }
  .sort { position: absolute; left: 50%; top: 1px; margin-left: -10px; }
  td { height: 42px; padding: 0 0 0 12px; color: #6d6d6d; white-space: nowrap; }
  td:first-child { padding-left: 8px; color: #000; }
  td.num { text-align: right; padding: 0 8px 0 0; }
  td.end { padding: 0; }
  .fname { display: flex; align-items: center; }
  .ficon { width: 32px; height: 32px; margin-right: 8px; }
  .selected td:not(.end) { height: 44px; background: #cce8ff; border: solid #99d1ff; border-width: 1px 0; }
  .selected td:first-child { border-left-width: 1px; padding-left: 7px; }
  .selected td.num { border-right-width: 1px; padding-right: 7px; }

  .status { display: flex; align-items: center; height: 46px; flex: none; color: #1e395b; white-space: nowrap; }
  .s1 { width: 143px; padding-left: 28px; border-right: 1px solid #ececec; line-height: 24px; }
  .s2 { padding-left: 20px; }
  .s3 { margin-left: 16px; padding-right: 21px; border-right: 1px solid #ececec; line-height: 24px; }
  .view { width: 44px; height: 46px; display: grid; place-items: center; margin-right: 8px; }
  .view:last-child { width: 28px; margin-right: 16px; }
  .view.on { background: #cce8f4; border: 1px solid #26a0da; }
</style>
